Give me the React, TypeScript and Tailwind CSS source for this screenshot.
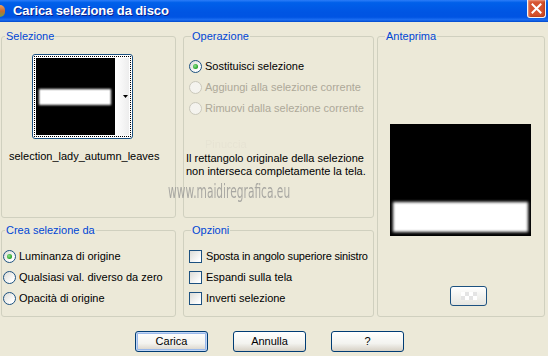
import React from "react";

const font = { fontFamily: '"Liberation Sans", Tahoma, sans-serif' };

function Radio({ checked, disabled }: { checked?: boolean; disabled?: boolean }) {
  return (
    <span
      className={`flex h-[13px] w-[13px] shrink-0 items-center justify-center rounded-full border ${
        disabled
          ? "border-[#CAC8BB] bg-[#F4F3EE]"
          : "border-[#1C5180] bg-[linear-gradient(135deg,#DCDCD7_0%,#FFFFFF_80%)]"
      }`}
    >
      {checked && (
        <span className="h-[5px] w-[5px] rounded-full bg-[radial-gradient(circle_at_40%_40%,#8FE08F,#21A121_70%)]" />
      )}
    </span>
  );
}

function Check() {
  return (
    <span className="h-[13px] w-[13px] shrink-0 border border-[#1C5180] bg-[linear-gradient(135deg,#DCDCD7_0%,#FFFFFF_85%)]" />
  );
}

function Group({
  title,
  indent,
  className,
  children,
}: {
  title: string;
  indent: string;
  className: string;
  children?: React.ReactNode;
}) {
  return (
    <fieldset className={`rounded-[3px] border border-[#D0D0BF] ${className}`}>
      <legend className={`${indent} px-[1px] text-[11px] leading-[13px] text-[#0046D5]`}>{title}</legend>
      {children}
    </fieldset>
  );
}

function XpButton({ label, def }: { label: string; def?: boolean }) {
  return (
    <button
      className={`h-[21px] w-[73px] rounded-[3px] border border-[#003C74] bg-[linear-gradient(to_bottom,#FFFFFF_0%,#F3F3EF_60%,#D6D0C5_100%)] text-[11px] text-black ${
        def ? "shadow-[inset_0_0_0_1px_#C2D6F5,inset_0_0_0_2px_#99B8EA]" : ""
      }`}
    >
      {label}
    </button>
  );
}

export default function App() {
  return (
    <div className="relative flex h-[356px] w-[548px] flex-col overflow-hidden bg-[#ECE9D8]" style={font}>
      {/* title bar */}
      <div className="flex h-[22px] shrink-0 items-start justify-between bg-[linear-gradient(to_bottom,#2C7DF8_0%,#0060EA_12%,#0055E3_55%,#0054E3_78%,#1C6EF2_90%,#0048CC_100%)]">
        <div className="flex h-[21px] items-center">
          <span className="h-[12px] w-[5px] rounded-r-full bg-[linear-gradient(to_bottom,#F0A060,#C86A30_50%,#6CA04A)]" />
          <span className="ml-[8px] text-[13px] font-bold tracking-[-0.1px] text-white [text-shadow:1px_1px_0_#0A1E8C]">
            Carica selezione da disco
          </span>
        </div>
        <div className="mr-[2px] flex h-[18px] w-[19px] items-center justify-center rounded-b-[3px] border border-t-0 border-[#F4F4F4] bg-[#D5522E] shadow-[inset_1px_1px_2px_#EE9C82,inset_-1px_-1px_2px_#B23A17]">
          <svg width="11" height="11" viewBox="0 0 11 11">
            <path d="M1.5 1.5 L9.5 9.5 M9.5 1.5 L1.5 9.5" stroke="#fff" strokeWidth="2" strokeLinecap="square" />
          </svg>
        </div>
      </div>

      {/* body */}
      <div className="flex pt-[8px] pl-[1px] text-[11px] leading-[13px] whitespace-nowrap text-black">
        <div className="flex w-[175px] flex-col gap-[6px]">
          <Group title="Selezione" indent="ml-[3px]" className="h-[188px]">
            <div className="mt-[11px] ml-[30px] flex h-[85px] w-[101px] rounded-[3px] border border-[#1C5180] bg-white p-[1px]">
              <div className="flex flex-1 border border-dotted border-black p-[1px]">
                <div className="flex h-full w-[79px] items-center overflow-hidden bg-black">
                  <div className="ml-[3px] h-[16px] w-[72px] bg-white blur-[1px]" />
                </div>
                <div className="flex flex-1 items-center justify-end bg-[linear-gradient(to_right,#FFFFFF,#EDEDED)] pr-[1px]">
                  <svg width="5" height="3" viewBox="0 0 5 3">
                    <path d="M0 0 H5 L2.5 3 Z" fill="#000" />
                  </svg>
                </div>
              </div>
            </div>
            <div className="mt-[11px] ml-[7px]">selection_lady_autumn_leaves</div>
          </Group>
          <Group title="Crea selezione da" indent="ml-[3px]" className="h-[93px]">
            <div className="flex flex-col pt-[9px] pl-[1px]">
              <label className="flex h-[21px] items-center gap-[3px]">
                <Radio checked /> Luminanza di origine
              </label>
              <label className="flex h-[21px] items-center gap-[3px]">
                <Radio /> Qualsiasi val. diverso da zero
              </label>
              <label className="flex h-[21px] items-center gap-[3px]">
                <Radio /> Opacità di origine
              </label>
            </div>
          </Group>
        </div>

        <div className="ml-[7px] flex w-[191px] flex-col gap-[6px]">
          <Group title="Operazione" indent="ml-[7px]" className="h-[188px]">
            <div className="flex flex-col pt-[13px] pl-[5px]">
              <label className="flex h-[21px] items-center gap-[3px]">
                <Radio checked /> Sostituisci selezione
              </label>
              <label className="flex h-[21px] items-center gap-[3px] text-[#ACA899]">
                <Radio disabled /> Aggiungi alla selezione corrente
              </label>
              <label className="flex h-[21px] items-center gap-[3px] text-[#ACA899]">
                <Radio disabled /> Rimuovi dalla selezione corrente
              </label>
            </div>
            <div className="mt-[33px] ml-[2px]">
              Il rettangolo originale della selezione
              <br />
              non interseca completamente la tela.
            </div>
          </Group>
          <Group title="Opzioni" indent="ml-[7px]" className="h-[93px]">
            <div className="flex flex-col pt-[9px] pl-[5px]">
              <label className="flex h-[21px] items-center gap-[4px] tracking-[-0.2px]">
                <Check /> Sposta in angolo superiore sinistro
              </label>
              <label className="flex h-[21px] items-center gap-[4px]">
                <Check /> Espandi sulla tela
              </label>
              <label className="flex h-[21px] items-center gap-[4px]">
                <Check /> Inverti selezione
              </label>
            </div>
          </Group>
        </div>

        <Group title="Anteprima" indent="ml-[7px]" className="ml-[3px] h-[287px] w-[168px]">
          <div className="mt-[81px] ml-[12px] flex h-[112px] w-[141px] items-end overflow-hidden bg-black pb-[4px]">
            <div className="ml-[3px] h-[30px] w-[135px] bg-white blur-[1.5px]" />
          </div>
          <div className="mt-[50px] ml-[72px] flex h-[20px] w-[37px] items-center justify-center rounded-[3px] border border-[#1C5180] bg-[linear-gradient(to_bottom,#FFFFFF,#E6E6E0)]">
            <div className="grid grid-cols-4">
              <span className="h-[4px] w-[4px] bg-white" />
              <span className="h-[4px] w-[4px] bg-[#E4E4E4]" />
              <span className="h-[4px] w-[4px] bg-white" />
              <span className="h-[4px] w-[4px] bg-[#E4E4E4]" />
              <span className="h-[4px] w-[4px] bg-[#E4E4E4]" />
              <span className="h-[4px] w-[4px] bg-white" />
              <span className="h-[4px] w-[4px] bg-[#E4E4E4]" />
              <span className="h-[4px] w-[4px] bg-white" />
            </div>
          </div>
        </Group>
      </div>

      {/* buttons */}
      <div className="mt-[14px] flex gap-[25px] pl-[135px]">
        <XpButton label="Carica" def />
        <XpButton label="Annulla" />
        <XpButton label="?" />
      </div>

      {/* watermark */}
      <div
        className="pointer-events-none absolute top-[181px] left-[168px] origin-left scale-x-[0.56] text-[19px] leading-[20px] whitespace-nowrap text-[#8C8C8C] opacity-70"
        style={{ fontFamily: '"DejaVu Sans", sans-serif' }}
      >
        www.maidiregrafica.eu
      </div>
      <div className="pointer-events-none absolute top-[138px] left-[205px] text-[11px] leading-[13px] text-[#E2DECF] opacity-50">
        Pinuccia
      </div>
    </div>
  );
}
